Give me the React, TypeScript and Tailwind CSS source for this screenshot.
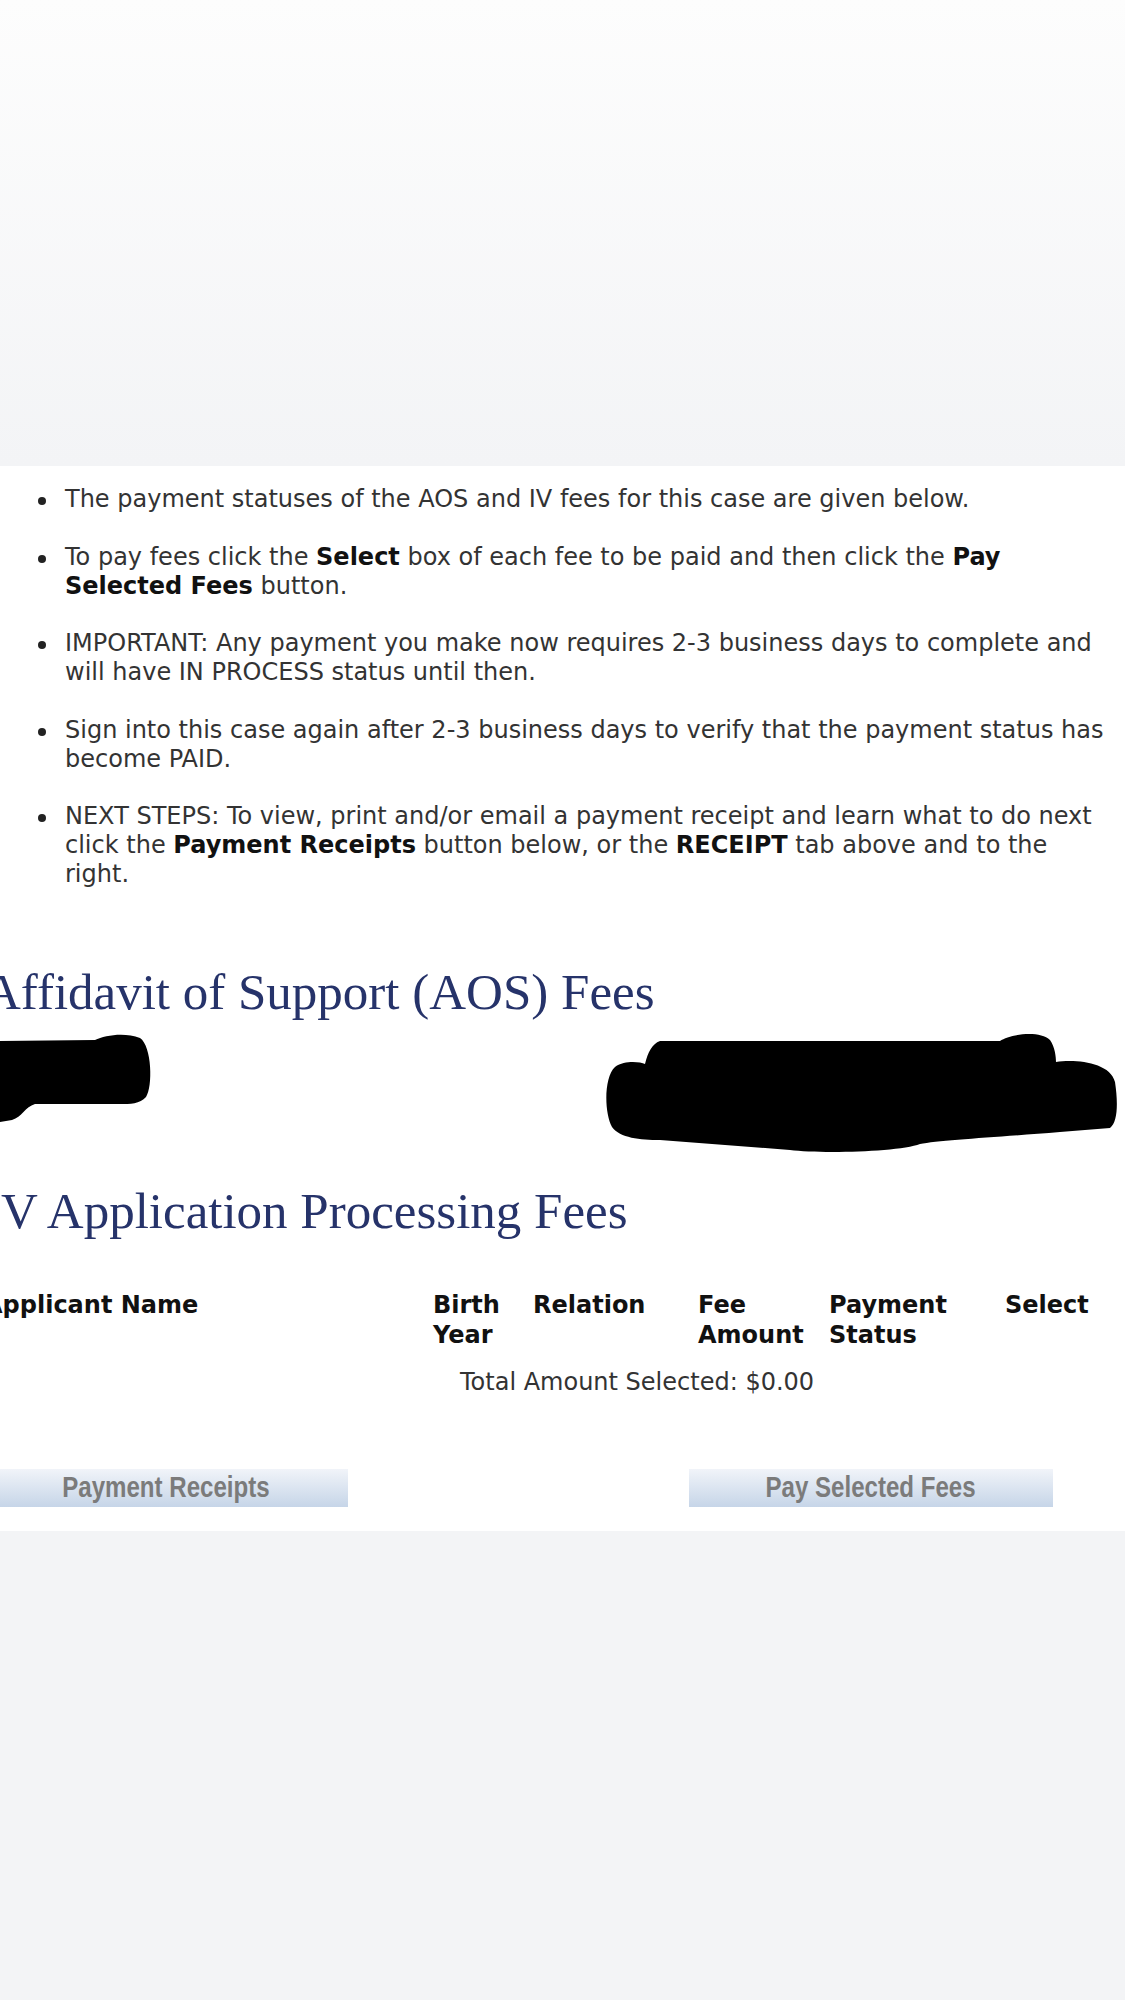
import React from 'react';

const bullets: React.ReactNode[] = [
  <>The payment statuses of the AOS and IV fees for this case are given below.</>,
  <>
    To pay fees click the <b className="text-[#111]">Select</b> box of each fee to be paid and then click the{' '}
    <b className="text-[#111]">Pay</b>
    <br />
    <b className="text-[#111]">Selected Fees</b> button.
  </>,
  <>
    IMPORTANT: Any payment you make now requires 2-3 business days to complete and
    <br />
    will have IN PROCESS status until then.
  </>,
  <>
    Sign into this case again after 2-3 business days to verify that the payment status has
    <br />
    become PAID.
  </>,
  <>
    NEXT STEPS: To view, print and/or email a payment receipt and learn what to do next
    <br />
    click the <b className="text-[#111]">Payment Receipts</b> button below, or the{' '}
    <b className="text-[#111]">RECEIPT</b> tab above and to the
    <br />
    right.
  </>,
];

function FeeButton({ label }: { label: string }) {
  return (
    <button className="flex h-[38px] w-[364px] items-center justify-center bg-gradient-to-b from-[#f1f4f9] to-[#c6d5e8] font-['Liberation_Sans',sans-serif] text-[29px] font-bold text-[#7b7b7b]">
      <span className="inline-block scale-x-[0.83] whitespace-nowrap">{label}</span>
    </button>
  );
}

export default function App() {
  return (
    <div className="min-h-[2000px] w-[1125px] overflow-hidden bg-[#f3f4f6] font-['DejaVu_Sans',sans-serif]">
      <div className="h-[466px] bg-gradient-to-b from-[#fdfdfd] to-[#f3f4f6]" />

      <div className="h-[1065px] overflow-hidden bg-white">
        <ul className="flex flex-col gap-[28.5px] pt-[19px] text-[24px] leading-[29px] text-[#333]">
          {bullets.map((b, i) => (
            <li key={i} className="flex">
              <span className="ml-[38px] mt-[12px] h-2 w-2 shrink-0 rounded-full bg-[#222]" />
              <span className="ml-[19px] whitespace-nowrap">{b}</span>
            </li>
          ))}
        </ul>

        <div className="-ml-4">
          <h2 className="mt-[78px] whitespace-nowrap font-['Liberation_Serif',serif] text-[51px] leading-[51px] text-[#26336a]">
            Affidavit of Support (AOS) Fees
          </h2>

          {/* redacted names */}
          <div className="ml-4 mt-[14px] h-[120px]">
            <svg width="1125" height="120" viewBox="0 0 1125 120" className="overflow-visible">
              <path
                d="M0,9 L95,8 C105,3 125,0 140,6 C152,14 153,55 146,65 C140,72 130,72 120,72 L35,72 C25,75 22,85 12,88 L0,90 Z"
                fill="#000"
              />
              <path
                d="M660,9 L1000,9 C1010,2 1040,-2 1050,8 C1055,15 1056,25 1056,30 C1075,27 1110,30 1115,50 C1118,70 1118,90 1110,96 L1060,100 C1000,105 940,108 920,112 C900,120 820,122 790,118 L660,108 C640,108 620,106 612,95 C604,80 604,45 615,35 C625,28 640,30 645,32 C648,20 652,12 660,9 Z"
                fill="#000"
              />
            </svg>
          </div>

          <h2 className="mt-[34px] whitespace-nowrap font-['Liberation_Serif',serif] text-[51px] leading-[51px] text-[#26336a]">
            IV Application Processing Fees
          </h2>

          <div className="mt-[53px] grid grid-cols-[449px_100px_165px_131px_176px_auto] text-[24px] font-bold leading-[30px] text-[#111]">
            <div className="whitespace-nowrap">Applicant Name</div>
            <div>
              Birth
              <br />
              Year
            </div>
            <div>Relation</div>
            <div>
              Fee
              <br />
              Amount
            </div>
            <div>
              Payment
              <br />
              Status
            </div>
            <div>Select</div>
          </div>

          <div className="mt-[18px] pl-[476px] text-[24px] leading-[29px] text-[#333]">
            Total Amount Selected: $0.00
          </div>

          <div className="mt-[72px] flex">
            <FeeButton label="Payment Receipts" />
            <div className="ml-[341px]">
              <FeeButton label="Pay Selected Fees" />
            </div>
          </div>
        </div>
      </div>
    </div>
  );
}
